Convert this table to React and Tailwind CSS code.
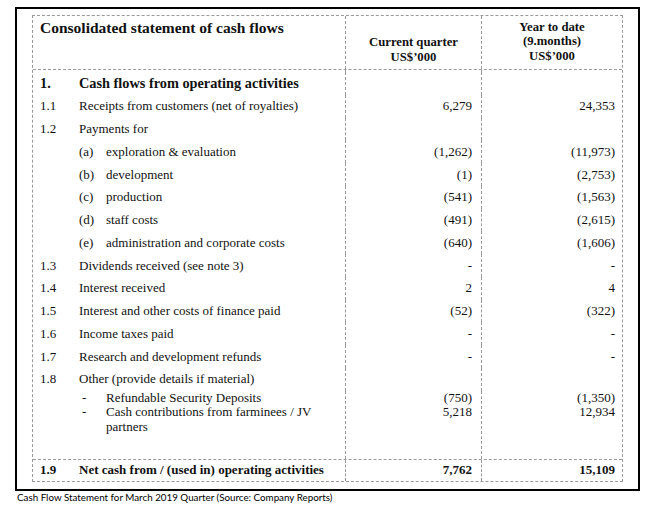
const rows = [
  { no: '1.', label: 'Cash flows from operating activities', bold: true },
  { no: '1.1', label: 'Receipts from customers (net of royalties)', q: '6,279', ytd: '24,353' },
  { no: '1.2', label: 'Payments for' },
  { sub: '(a)', label: 'exploration & evaluation', q: '(1,262)', ytd: '(11,973)' },
  { sub: '(b)', label: 'development', q: '(1)', ytd: '(2,753)' },
  { sub: '(c)', label: 'production', q: '(541)', ytd: '(1,563)' },
  { sub: '(d)', label: 'staff costs', q: '(491)', ytd: '(2,615)' },
  { sub: '(e)', label: 'administration and corporate costs', q: '(640)', ytd: '(1,606)' },
  { no: '1.3', label: 'Dividends received (see note 3)', q: '-', ytd: '-' },
  { no: '1.4', label: 'Interest received', q: '2', ytd: '4' },
  { no: '1.5', label: 'Interest and other costs of finance paid', q: '(52)', ytd: '(322)' },
  { no: '1.6', label: 'Income taxes paid', q: '-', ytd: '-' },
  { no: '1.7', label: 'Research and development refunds', q: '-', ytd: '-' },
  { no: '1.8', label: 'Other (provide details if material)' },
];

const other = [
  { label: 'Refundable Security Deposits', q: '(750)', ytd: '(1,350)' },
  { label: 'Cash contributions from farminees / JV', q: '5,218', ytd: '12,934' },
  { label: 'partners', dashless: true },
];

const dash = 'border-l border-dashed border-[#9a9a9a]';

const Row = ({ row }) => (
  <div className="grid h-[22.75px] grid-cols-[312px_136px_141px] items-center">
    <div className={`flex pl-[7px] ${row.bold ? 'text-[14.3px] font-bold' : ''}`}>
      {row.sub ? (
        <>
          <span className="w-[39px]" />
          <span className="w-[27px]">{row.sub}</span>
        </>
      ) : (
        <span className="w-[39px]">{row.no}</span>
      )}
      <span>{row.label}</span>
    </div>
    <div className={`${dash} h-full flex items-center justify-end pr-[9px]`}>{row.q}</div>
    <div className={`${dash} h-full flex items-center justify-end pr-[7px]`}>{row.ytd}</div>
  </div>
);

export default function App() {
  return (
    <div className="min-h-[511px] bg-white pt-[7px] pl-[15px] text-[#111]" style={{ fontFamily: '"Liberation Serif", serif' }}>
      <div className="w-[625px] h-[484px] border-2 border-black px-[15px] pt-[6px]">
        <div className="w-[591px] border border-dashed border-[#9a9a9a] text-[13px]">
          {/* header */}
          <div className="grid h-[54px] grid-cols-[312px_136px_141px] border-b border-dashed border-[#9a9a9a] font-bold">
            <div className="pl-[7px] pt-[3px] text-[15.5px] leading-[18px]">Consolidated statement of cash flows</div>
            <div className={`${dash} flex flex-col items-center justify-end pb-[4px] text-[12.7px] leading-[15px]`}>
              <span>Current quarter</span>
              <span>US$’000</span>
            </div>
            <div className={`${dash} flex flex-col items-center justify-end pb-[6px] text-[12.7px] leading-[14.5px]`}>
              <span>Year to date</span>
              <span>(9.months)</span>
              <span>US$’000</span>
            </div>
          </div>

          {/* body */}
          <div className="grid h-[2px] grid-cols-[312px_136px_141px]">
            <div />
            <div className={dash} />
            <div className={dash} />
          </div>
          {rows.map((row, i) => (
            <Row key={i} row={row} />
          ))}
          <div className="grid h-[68px] grid-cols-[312px_136px_141px] leading-[14.75px]">
            <div className="pl-[7px]">
              {other.map((o, i) => (
                <div key={i} className="flex">
                  <span className="w-[39px]" />
                  <span className="w-[27px] pl-[3px]">{o.dashless ? '' : '-'}</span>
                  <span>{o.label}</span>
                </div>
              ))}
            </div>
            <div className={`${dash} pr-[9px] text-right`}>
              {other.map((o, i) => (
                <div key={i} className="h-[14.75px]">{o.q}</div>
              ))}
            </div>
            <div className={`${dash} pr-[7px] text-right`}>
              {other.map((o, i) => (
                <div key={i} className="h-[14.75px]">{o.ytd}</div>
              ))}
            </div>
          </div>

          {/* total */}
          <div className="grid h-[22px] grid-cols-[312px_136px_141px] items-center border-t border-dashed border-[#9a9a9a] font-bold text-[13px]">
            <div className="flex pl-[7px]">
              <span className="w-[39px]">1.9</span>
              <span>Net cash from / (used in) operating activities</span>
            </div>
            <div className={`${dash} h-full flex items-center justify-end pr-[9px]`}>7,762</div>
            <div className={`${dash} h-full flex items-center justify-end pr-[7px]`}>15,109</div>
          </div>
        </div>
      </div>
      <p className="pl-[2px] text-[9.8px] leading-[12px] text-black" style={{ fontFamily: 'Lato, sans-serif' }}>
        Cash Flow Statement for March 2019 Quarter (Source: Company Reports)
      </p>
    </div>
  );
}
